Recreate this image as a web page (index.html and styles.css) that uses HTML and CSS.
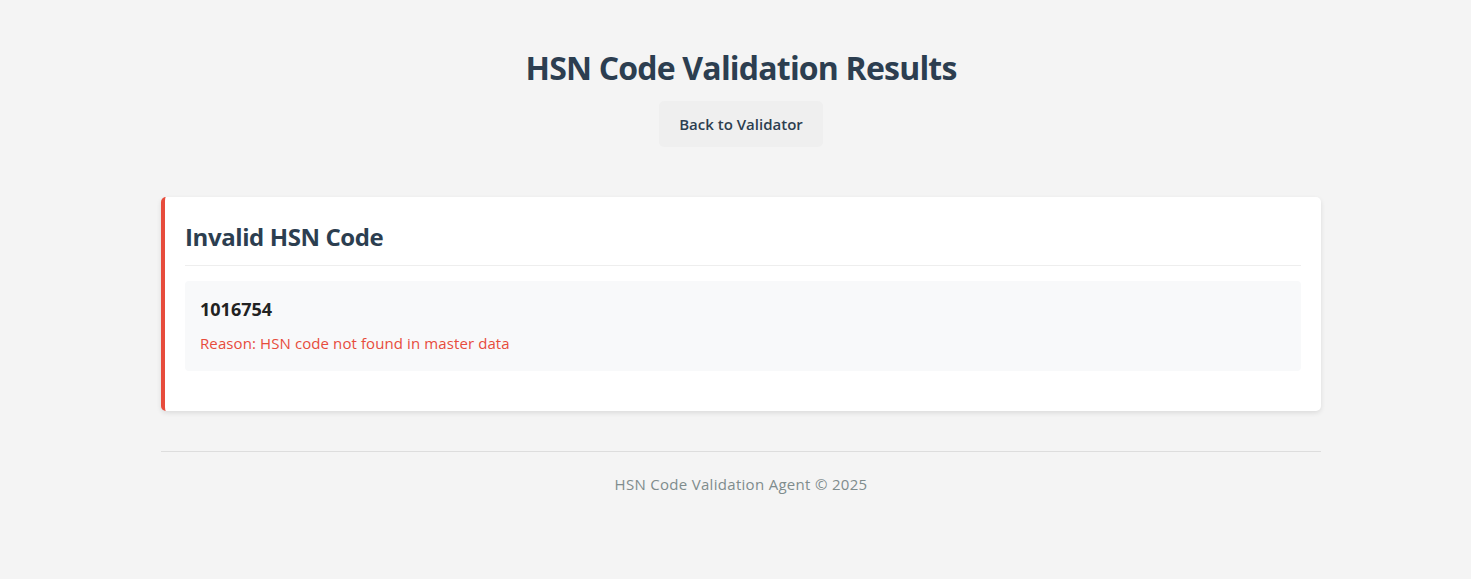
FILE: index.html
```html
<!DOCTYPE html>
<html lang="en">
<head>
<meta charset="utf-8">
<title>HSN Code Validation Results</title>
<link rel="stylesheet" href="styles.css">
</head>
<body>
<div class="page">
  <div class="container">
    <header class="header">
      <h1 class="title">HSN Code Validation Results</h1>
      <a class="back-btn" href="#">Back to Validator</a>
    </header>
    <section class="card card-invalid">
      <h2 class="card-title">Invalid HSN Code</h2>
      <div class="result-item">
        <h3 class="code">1016754</h3>
        <p class="reason">Reason: HSN code not found in master data</p>
      </div>
    </section>
    <footer class="footer">
      <p>HSN Code Validation Agent © 2025</p>
    </footer>
  </div>
</div>
</body>
</html>
```
FILE: styles.css
```css
* { box-sizing: border-box; }
html, body { margin: 0; padding: 0; }
body {
  background: #f4f4f4;
  font-family: "Open Sans", "Noto Sans", sans-serif;
  color: #333;
}
.page {
  padding-left: 11px;
}
.container {
  width: 1160px;
  margin: 0 auto;
}
.header {
  display: flex;
  flex-direction: column;
  align-items: center;
  padding-top: 49px;
}
.title {
  margin: 0;
  font-size: 32px;
  line-height: 38px;
  font-weight: 700;
  letter-spacing: -0.8px;
  color: #2c3e50;
}
.back-btn {
  margin-top: 14px;
  display: inline-block;
  height: 46px;
  padding: 0 20px;
  line-height: 46px;
  background: #efefef;
  border-radius: 5px;
  color: #2c3e50;
  font-size: 15px;
  font-weight: 600;
  text-decoration: none;
}
.card {
  margin-top: 50px;
  background: #fff;
  border-radius: 5px;
  box-shadow: 0 2px 5px rgba(0,0,0,0.1);
  padding: 22px 20px 20px 20px;
}
.card-invalid {
  border-left: 4px solid #e74c3c;
}
.card-title {
  margin: 0;
  font-size: 24px;
  line-height: 36px;
  font-weight: 700;
  letter-spacing: -0.4px;
  color: #2c3e50;
  padding-bottom: 10px;
  border-bottom: 1px solid #eeeeee;
}
.result-item {
  margin-top: 15px;
  margin-bottom: 20px;
  background: #f8f9fa;
  border-radius: 4px;
  padding: 15px 15px 17px;
}
.code {
  margin: 0;
  font-size: 18px;
  line-height: 27px;
  font-weight: 700;
  color: #222;
}
.reason {
  margin: 9px 0 0;
  font-size: 15px;
  line-height: 22px;
  letter-spacing: 0.1px;
  color: #e74c3c;
}
.footer {
  margin-top: 40px;
  border-top: 1px solid #dddddd;
  padding-top: 21px;
  text-align: center;
}
.footer p {
  margin: 0;
  font-size: 15px;
  line-height: 22px;
  letter-spacing: 0.3px;
  color: #7f8c8d;
}
```
